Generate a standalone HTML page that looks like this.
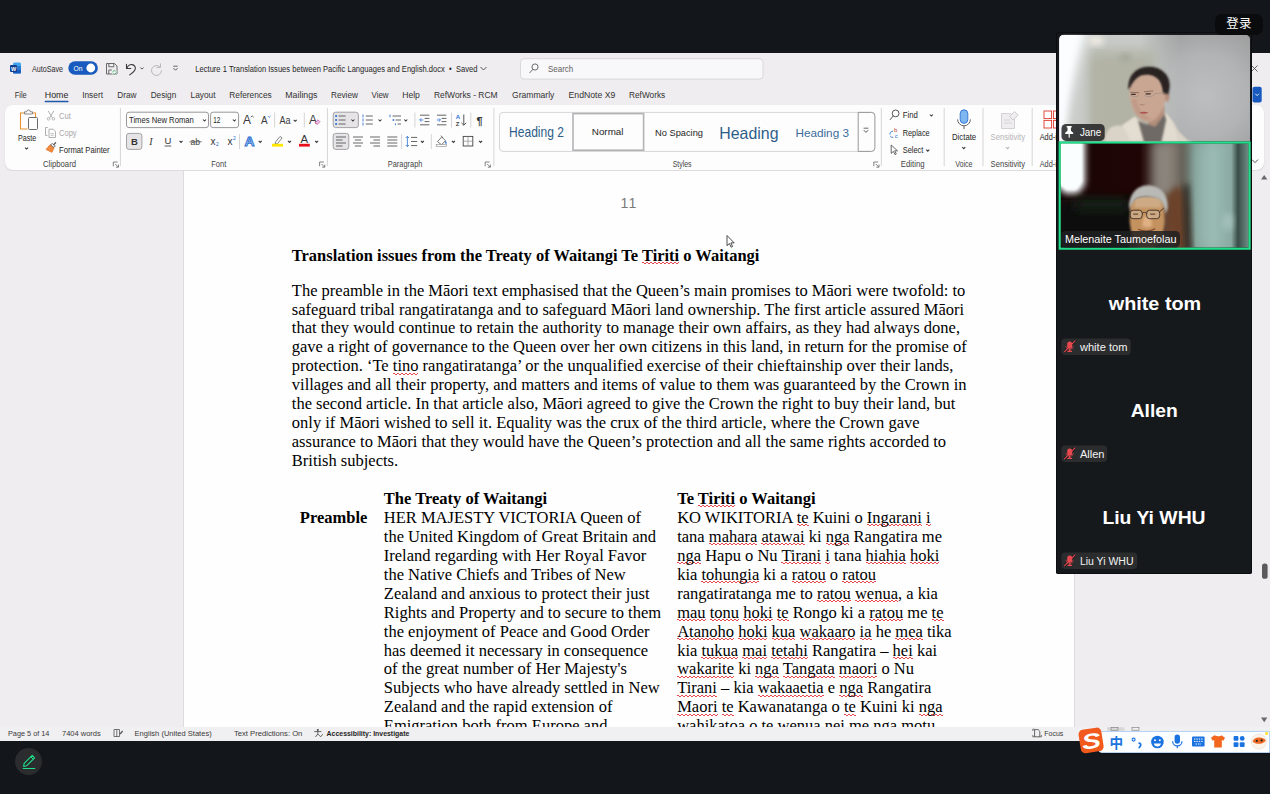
<!DOCTYPE html>
<html lang="en">
<head>
<meta charset="utf-8">
<title>Lecture 1 Translation Issues between Pacific Languages and English.docx</title>
<style>
*{box-sizing:border-box;margin:0;padding:0}
html,body{width:1270px;height:794px;overflow:hidden;background:#13161a}
body{position:relative;font-family:"Liberation Sans","Noto Sans CJK SC",sans-serif}
.abs{position:absolute}
#word{left:0;top:53px;width:1270px;height:688px;background:#efedf0;overflow:hidden}
#ribbon{left:5px;top:52px;width:1259px;height:65px;background:#fdfdfd;border-radius:8px;box-shadow:0 1px 2px rgba(0,0,0,.10)}
#docarea{left:0;top:118px;width:1270px;height:556px;background:#efedf0;overflow:hidden}
#page{left:183.3px;top:0;width:891.9px;height:556px;background:#fefefe;border-left:1.5px solid #dddbde;border-right:1px solid #dddbde}
#status{left:0;top:674px;width:1270px;height:14px;background:#f0eff1}
.doc{font-family:"Liberation Serif","Noto Serif CJK SC",serif;font-size:16.5px;line-height:18.93px;color:#000;white-space:nowrap}
.doc b{font-weight:bold}
.w{background-image:repeating-linear-gradient(90deg,#e5484d 0 2px,transparent 2px 4px),repeating-linear-gradient(90deg,transparent 0 2px,#e5484d 2px 4px);background-size:100% 1px,100% 1px;background-position:0 16.2px,0 17.2px;background-repeat:no-repeat}
#chrome{left:0;top:0;width:1270px;height:794px;pointer-events:none}
</style>
</head>
<body>
<!-- WORD WINDOW -->
<div id="word" class="abs">
  <div id="ribbon" class="abs"></div>
  <div id="docarea" class="abs">
    <div id="page" class="abs"></div>
        <div class="abs" style="left:620.5px;top:23.8px;font-size:14.1px;line-height:16px;color:#7a7a7a;letter-spacing:1.2px">11</div>
    <div class="abs doc" style="left:291.8px;top:76.3px;font-size:16.48px"><b>Translation issues from the Treaty of Waitangi Te <span class="w">Tiriti</span> o Waitangi</b></div>
    <div class="abs doc" style="left:291.8px;top:110.6px">
      <div>The preamble in the Māori text emphasised that the Queen’s main promises to Māori were twofold: to</div>
      <div>safeguard tribal rangatiratanga and to safeguard Māori land ownership. The first article assured Māori</div>
      <div>that they would continue to retain the authority to manage their own affairs, as they had always done,</div>
      <div>gave a right of governance to the Queen over her own citizens in this land, in return for the promise of</div>
      <div>protection. ‘Te <span class="w">tino</span> rangatiratanga’ or the unqualified exercise of their chieftainship over their lands,</div>
      <div>villages and all their property, and matters and items of value to them was guaranteed by the Crown in</div>
      <div>the second article. In that article also, Māori agreed to give the Crown the right to buy their land, but</div>
      <div>only if Māori wished to sell it. Equality was the crux of the third article, where the Crown gave</div>
      <div>assurance to Māori that they would have the Queen’s protection and all the same rights accorded to</div>
      <div>British subjects.</div>
    </div>
    <div class="abs doc" style="left:299.8px;top:338px;font-size:16.5px"><b>Preamble</b></div>
    <div class="abs doc" style="left:383.8px;top:319px;font-size:16.5px">
      <div><b>The Treaty of Waitangi</b></div>
      <div>HER MAJESTY VICTORIA Queen of</div>
      <div>the United Kingdom of Great Britain and</div>
      <div>Ireland regarding with Her Royal Favor</div>
      <div>the Native Chiefs and Tribes of New</div>
      <div>Zealand and anxious to protect their just</div>
      <div>Rights and Property and to secure to them</div>
      <div>the enjoyment of Peace and Good Order</div>
      <div>has deemed it necessary in consequence</div>
      <div>of the great number of Her Majesty's</div>
      <div>Subjects who have already settled in New</div>
      <div>Zealand and the rapid extension of</div>
      <div>Emigration both from Europe and</div>
    </div>
    <div class="abs doc" style="left:677.2px;top:319px;font-size:16.5px">
      <div><b>Te <span class="w">Tiriti</span> o Waitangi</b></div>
      <div>KO WIKITORIA <span class="w">te</span> Kuini o <span class="w">Ingarani</span> <span class="w">i</span></div>
      <div>tana <span class="w">mahara</span> <span class="w">atawai</span> ki <span class="w">nga</span> Rangatira me</div>
      <div><span class="w">nga</span> Hapu o Nu <span class="w">Tirani</span> <span class="w">i</span> tana <span class="w">hiahia</span> <span class="w">hoki</span></div>
      <div>kia <span class="w">tohungia</span> ki a <span class="w">ratou</span> o <span class="w">ratou</span></div>
      <div>rangatiratanga me to <span class="w">ratou</span> <span class="w">wenua</span>, a kia</div>
      <div><span class="w">mau</span> <span class="w">tonu</span> <span class="w">hoki</span> <span class="w">te</span> Rongo ki a <span class="w">ratou</span> me <span class="w">te</span></div>
      <div><span class="w">Atanoho</span> <span class="w">hoki</span> <span class="w">kua</span> <span class="w">wakaaro</span> <span class="w">ia</span> he <span class="w">mea</span> tika</div>
      <div>kia <span class="w">tukua</span> <span class="w">mai</span> <span class="w">tetahi</span> Rangatira – <span class="w">hei</span> kai</div>
      <div><span class="w">wakarite</span> ki <span class="w">nga</span> <span class="w">Tangata</span> <span class="w">maori</span> o Nu</div>
      <div><span class="w">Tirani</span> – kia <span class="w">wakaaetia</span> e <span class="w">nga</span> Rangatira</div>
      <div><span class="w">Maori</span> <span class="w">te</span> Kawanatanga o <span class="w">te</span> Kuini ki <span class="w">nga</span></div>
      <div><span class="w">wahikatoa</span> o <span class="w">te</span> <span class="w">wenua</span> nei me <span class="w">nga</span> <span class="w">motu</span></div>
    </div>

  </div>
  <div id="status" class="abs"></div>
</div>
<svg id="chrome" class="abs" width="1270" height="794" viewBox="0 0 1270 794" font-family="Liberation Sans, sans-serif">
<g id="titlebar">
<rect x="13" y="62.5" width="8" height="11" rx="1.5" fill="#41a5ee"/><rect x="13" y="66" width="8" height="4" fill="#2b7cd3"/><rect x="13" y="69.8" width="8" height="3.7" rx="1" fill="#185abd"/><rect x="10" y="65" width="7" height="7" rx="1" fill="#103f91"/>
<text x="11" y="70.6" font-size="5.5" font-weight="bold" fill="#fff">W</text>
<text x="32.0" y="71.6" font-size="8.5" fill="#2b2b2b" textLength="31.0" lengthAdjust="spacingAndGlyphs">AutoSave</text>
<rect x="68.3" y="61.3" width="29.6" height="13.4" rx="6.7" fill="#185abd"/><circle cx="90.8" cy="68" r="4.4" fill="#fff"/>
<text x="73.5" y="71.0" font-size="8" fill="#fff" textLength="9.0" lengthAdjust="spacingAndGlyphs">On</text>
<g fill="none" stroke="#5a5a5a" stroke-width="0.9"><path d="M106.5 63.5h8l2.5 2.5v8h-10.5z"/><path d="M108.8 63.5v3.3h5v-3.3"/><path d="M108.8 74v-4h3"/></g><path d="M112.3 70.5h4.2v3.8h-4.2z" fill="#fff"/><path d="M112.6 72.4a1.8 1.8 0 0 1 3.2-1M116.2 72.3a1.8 1.8 0 0 1-3.2 1" fill="none" stroke="#2e9c5e" stroke-width="0.8"/>
<path d="M126.5 64.2v4.3h4.3M126.8 68.2c1.3-2.6 3.4-3.8 5.3-3.6 2.3.3 3.5 2.3 3.2 4.3-.4 2.3-2.6 3.9-5.6 6" fill="none" stroke="#3a3a3a" stroke-width="1.1" stroke-linecap="round" stroke-linejoin="round"/>
<path d="M140.3 67.5l1.6 1.6 1.6-1.6" fill="none" stroke="#444" stroke-width="0.9"/>
<path d="M160.5 63.8v3.6h-3.6M160.3 67.2a5 5 0 1 0 1.2 3.6" fill="none" stroke="#b9b7ba" stroke-width="1" stroke-linecap="round"/>
<path d="M173.3 66.2h4.4" stroke="#444" stroke-width="0.8"/><path d="M173.5 68.2l2 2 2-2" fill="none" stroke="#444" stroke-width="0.9"/>
<text x="195.3" y="71.6" font-size="8.5" fill="#262626" textLength="282.1" lengthAdjust="spacingAndGlyphs">Lecture 1 Translation Issues between Pacific Languages and English.docx  •  Saved</text>
<path d="M480.5 67l3 3 3-3" fill="none" stroke="#444" stroke-width="0.9"/>
<rect x="520.5" y="58.7" width="242.5" height="20.4" rx="3.5" fill="#f8f7f9" stroke="#d9d7da" stroke-width="1"/>
<circle cx="535" cy="67" r="3.1" fill="none" stroke="#5f5f5f" stroke-width="0.9"/><path d="M532.8 69.4l-3 3.3" stroke="#5f5f5f" stroke-width="0.9" stroke-linecap="round"/>
<text x="548.0" y="71.6" font-size="8.8" fill="#5f5f5f" textLength="25.2" lengthAdjust="spacingAndGlyphs">Search</text>
<path d="M1251.5 65.5l6 6M1257.5 65.5l-6 6" stroke="#555" stroke-width="0.9"/>
</g>
<g id="tabs">
<text x="14.7" y="97.8" font-size="9.2" fill="#333" textLength="12.1" lengthAdjust="spacingAndGlyphs">File</text>
<text x="44.8" y="97.8" font-size="9.2" fill="#1f1f1f" textLength="23.6" lengthAdjust="spacingAndGlyphs">Home</text>
<text x="82.2" y="97.8" font-size="9.2" fill="#333" textLength="20.8" lengthAdjust="spacingAndGlyphs">Insert</text>
<text x="117.2" y="97.8" font-size="9.2" fill="#333" textLength="19.3" lengthAdjust="spacingAndGlyphs">Draw</text>
<text x="150.7" y="97.8" font-size="9.2" fill="#333" textLength="25.5" lengthAdjust="spacingAndGlyphs">Design</text>
<text x="190.5" y="97.8" font-size="9.2" fill="#333" textLength="25.0" lengthAdjust="spacingAndGlyphs">Layout</text>
<text x="229.3" y="97.8" font-size="9.2" fill="#333" textLength="42.4" lengthAdjust="spacingAndGlyphs">References</text>
<text x="285.3" y="97.8" font-size="9.2" fill="#333" textLength="32.2" lengthAdjust="spacingAndGlyphs">Mailings</text>
<text x="331.0" y="97.8" font-size="9.2" fill="#333" textLength="26.9" lengthAdjust="spacingAndGlyphs">Review</text>
<text x="371.5" y="97.8" font-size="9.2" fill="#333" textLength="17.1" lengthAdjust="spacingAndGlyphs">View</text>
<text x="402.2" y="97.8" font-size="9.2" fill="#333" textLength="17.7" lengthAdjust="spacingAndGlyphs">Help</text>
<text x="434.0" y="97.8" font-size="9.2" fill="#333" textLength="63.5" lengthAdjust="spacingAndGlyphs">RefWorks - RCM</text>
<text x="512.0" y="97.8" font-size="9.2" fill="#333" textLength="42.4" lengthAdjust="spacingAndGlyphs">Grammarly</text>
<text x="568.5" y="97.8" font-size="9.2" fill="#333" textLength="46.9" lengthAdjust="spacingAndGlyphs">EndNote X9</text>
<text x="629.0" y="97.8" font-size="9.2" fill="#333" textLength="36.2" lengthAdjust="spacingAndGlyphs">RefWorks</text>
<rect x="44.6" y="100.8" width="24" height="1.4" rx="0.7" fill="#1f5aa8"/>
<rect x="1252.5" y="86.8" width="9.2" height="15.6" rx="2" fill="#185abd"/><path d="M1255.3 93.8l1.8 1.8 1.8-1.8" fill="none" stroke="#fff" stroke-width="0.9"/>
</g>
<g id="rib-clipboard">
<path d="M25.5 113h-5v16h7" fill="none" stroke="#e8912d" stroke-width="1.1"/><path d="M31.5 113h4v4" fill="none" stroke="#e8912d" stroke-width="1.1"/>
<path d="M24.5 114v-2.2h2.2a1.8 1.8 0 0 1 3.6 0h2.2V114z" fill="#fdfdfd" stroke="#7a7a7a" stroke-width="0.9"/>
<rect x="28.5" y="117.5" width="9" height="12" rx="1" fill="#fdfdfd" stroke="#6a6a6a" stroke-width="1"/>
<text x="18.0" y="140.8" font-size="9" fill="#262626" textLength="18.3" lengthAdjust="spacingAndGlyphs">Paste</text>
<path d="M25.1 147.6l1.5 1.5 1.5 -1.5" fill="none" stroke="#3a3a3a" stroke-width="1.05"/>
<path d="M48.2 111l4.2 6.8M53.8 111l-4.2 6.8" stroke="#a9a7aa" stroke-width="0.9"/><circle cx="48.6" cy="118.8" r="1.3" fill="none" stroke="#a9a7aa" stroke-width="0.8"/><circle cx="53.4" cy="118.8" r="1.3" fill="none" stroke="#a9a7aa" stroke-width="0.8"/>
<text x="59.0" y="118.6" font-size="9" fill="#a9a7aa" textLength="11.9" lengthAdjust="spacingAndGlyphs">Cut</text>
<path d="M47.8 127.5h-2.3v8h2" fill="none" stroke="#a9a7aa" stroke-width="0.9"/><path d="M49 129.2h4l2.5 2.5v5.8h-6.5z" fill="none" stroke="#a9a7aa" stroke-width="0.9"/><path d="M50.6 133.5h3.2M50.6 135.3h3.2" stroke="#a9a7aa" stroke-width="0.7"/>
<text x="59.0" y="135.9" font-size="9" fill="#a9a7aa" textLength="17.6" lengthAdjust="spacingAndGlyphs">Copy</text>
<path d="M46 149.5l4-4.8 4 3.2-2 4.5z" fill="#f08a3c" stroke="#d9681c" stroke-width="0.6"/><path d="M50.5 144.8l1.8-1.3 3 2.4-1.3 1.6z" fill="#fdfdfd" stroke="#555" stroke-width="0.8"/><path d="M53.8 144.6l1.8-1.8" stroke="#555" stroke-width="1.3" stroke-linecap="round"/>
<text x="59.0" y="152.9" font-size="9" fill="#262626" textLength="50.6" lengthAdjust="spacingAndGlyphs">Format Painter</text>
<text x="43.0" y="166.6" font-size="8.7" fill="#444" textLength="33.0" lengthAdjust="spacingAndGlyphs">Clipboard</text>
<path d="M113.3 166.3V162h4.3" fill="none" stroke="#666" stroke-width="0.8"/><path d="M115.3 164l3 3M118.5 164.6v2.6h-2.6" fill="none" stroke="#666" stroke-width="0.8"/>
<path d="M120.4 108V166" stroke="#d6d4d7" stroke-width="1"/>
</g>
<g id="rib-font">
<rect x="126.5" y="112.2" width="82" height="15.4" rx="2.5" fill="#fdfdfd" stroke="#8d8b8e" stroke-width="0.9"/>
<text x="129.0" y="123.0" font-size="9" fill="#262626" textLength="64.8" lengthAdjust="spacingAndGlyphs">Times New Roman</text>
<path d="M203.0 119.5l1.5 1.5 1.5 -1.5" fill="none" stroke="#3a3a3a" stroke-width="1.05"/>
<rect x="210.6" y="112.2" width="28" height="15.4" rx="2.5" fill="#fdfdfd" stroke="#8d8b8e" stroke-width="0.9"/>
<text x="213.2" y="123.0" font-size="9" fill="#262626" textLength="7.2" lengthAdjust="spacingAndGlyphs">12</text>
<path d="M232.9 119.5l1.5 1.5 1.5 -1.5" fill="none" stroke="#3a3a3a" stroke-width="1.05"/>
<text x="243" y="124" font-size="12" fill="#3a3a3a" textLength="8" lengthAdjust="spacingAndGlyphs">A</text><path d="M250.8 117.2l1.4-1.4 1.4 1.4" fill="none" stroke="#3a3a3a" stroke-width="0.8"/>
<text x="261" y="124" font-size="10" fill="#3a3a3a" textLength="6.6" lengthAdjust="spacingAndGlyphs">A</text><path d="M267.8 116l1.4 1.4 1.4-1.4" fill="none" stroke="#2a6fd0" stroke-width="0.8"/>
<path d="M274.6 112.5V127.5" stroke="#d6d4d7" stroke-width="1"/>
<text x="279.5" y="123.5" font-size="10" fill="#3a3a3a" textLength="11.0" lengthAdjust="spacingAndGlyphs">Aa</text>
<path d="M293.7 119.8l1.5 1.5 1.5 -1.5" fill="none" stroke="#3a3a3a" stroke-width="1.05"/>
<path d="M304.3 112.5V127.5" stroke="#d6d4d7" stroke-width="1"/>
<text x="309" y="124" font-size="12" fill="#3a3a3a" textLength="8" lengthAdjust="spacingAndGlyphs">A</text><path d="M315.2 122.6l2.8-2.8 1.9 1.9-2.8 2.8z" fill="#f4c6e6" stroke="#b0409a" stroke-width="0.7"/>
<rect x="126.5" y="133.4" width="15.4" height="16" rx="2.5" fill="#e6e4e7" stroke="#9a989b" stroke-width="0.9"/>
<text x="130.9" y="144.6" font-size="9.5" font-weight="bold" fill="#333">B</text>
<text x="149.3" y="144.6" font-size="10" font-style="italic" font-family="Liberation Serif, serif" fill="#333">I</text>
<text x="164.6" y="143.8" font-size="9.5" fill="#333">U</text><path d="M164.6 146h6.6" stroke="#333" stroke-width="0.8"/>
<path d="M179.5 140.9l1.5 1.5 1.5 -1.5" fill="none" stroke="#3a3a3a" stroke-width="1.05"/>
<text x="190.6" y="144.6" font-size="9" fill="#444" textLength="9.5" lengthAdjust="spacingAndGlyphs">ab</text><path d="M189.4 141.8h12.4" stroke="#444" stroke-width="0.7"/>
<text x="210.6" y="144.6" font-size="10" fill="#333">x</text><text x="216" y="146.4" font-size="5" fill="#2a6fd0">2</text>
<text x="227.6" y="144.6" font-size="10" fill="#333">x</text><text x="233" y="140" font-size="5" fill="#2a6fd0">2</text>
<path d="M239.5 134V149" stroke="#d6d4d7" stroke-width="1"/>
<text x="244.6" y="146" font-size="13" font-weight="bold" fill="#cfe3fa" stroke="#2a6fd0" stroke-width="0.9" textLength="10" lengthAdjust="spacingAndGlyphs">A</text>
<path d="M258.7 140.9l1.5 1.5 1.5 -1.5" fill="none" stroke="#3a3a3a" stroke-width="1.05"/>
<path d="M275.5 142l4.6-5.6 2 1.6-4.6 5.6-2.4.6z" fill="#fdfdfd" stroke="#666" stroke-width="0.8"/><rect x="272" y="143.8" width="11" height="2.8" fill="#ffe600"/>
<path d="M288.0 140.9l1.5 1.5 1.5 -1.5" fill="none" stroke="#3a3a3a" stroke-width="1.05"/>
<text x="300.6" y="142.6" font-size="10" fill="#333" textLength="7.6" lengthAdjust="spacingAndGlyphs">A</text><rect x="299" y="143.8" width="10.8" height="2.8" fill="#e8121d"/>
<path d="M315.1 140.9l1.5 1.5 1.5 -1.5" fill="none" stroke="#3a3a3a" stroke-width="1.05"/>
<text x="211.3" y="166.6" font-size="8.7" fill="#444" textLength="15.0" lengthAdjust="spacingAndGlyphs">Font</text>
<path d="M319.6 166.3V162h4.3" fill="none" stroke="#666" stroke-width="0.8"/><path d="M321.6 164l3 3M324.8 164.6v2.6h-2.6" fill="none" stroke="#666" stroke-width="0.8"/>
<path d="M327.4 108V166" stroke="#d6d4d7" stroke-width="1"/>
</g>
<g id="rib-para">
<rect x="333.2" y="112.2" width="25.2" height="15.4" rx="2.5" fill="#e6e4e7" stroke="#9a989b" stroke-width="0.9"/>
<rect x="335.2" y="115.1" width="1.8" height="1.8" fill="#2a6fd0"/><path d="M338.6 116h7" stroke="#555" stroke-width="0.9"/>
<rect x="335.2" y="119.1" width="1.8" height="1.8" fill="#2a6fd0"/><path d="M338.6 120h7" stroke="#555" stroke-width="0.9"/>
<rect x="335.2" y="123.1" width="1.8" height="1.8" fill="#2a6fd0"/><path d="M338.6 124h7" stroke="#555" stroke-width="0.9"/>
<path d="M351.4 119.5l1.5 1.5 1.5 -1.5" fill="none" stroke="#3a3a3a" stroke-width="1.05"/>
<path d="M363 114.6v2.8" stroke="#2a6fd0" stroke-width="0.9"/><path d="M365.8 116h7" stroke="#555" stroke-width="0.9"/>
<path d="M363 118.6v2.8" stroke="#2a6fd0" stroke-width="0.9"/><path d="M365.8 120h7" stroke="#555" stroke-width="0.9"/>
<path d="M363 122.6v2.8" stroke="#2a6fd0" stroke-width="0.9"/><path d="M365.8 124h7" stroke="#555" stroke-width="0.9"/>
<path d="M378.5 119.5l1.5 1.5 1.5 -1.5" fill="none" stroke="#3a3a3a" stroke-width="1.05"/>
<path d="M390 114.6v2.6" stroke="#2a6fd0" stroke-width="0.9"/><path d="M392.6 116h8.4" stroke="#555" stroke-width="0.9"/><rect x="392.6" y="119.2" width="1.6" height="1.6" fill="#2a6fd0"/><path d="M395.6 120h5.4" stroke="#555" stroke-width="0.9"/><path d="M395.4 123.2v2" stroke="#2a6fd0" stroke-width="0.8"/><path d="M397.6 124h3.4" stroke="#555" stroke-width="0.9"/>
<path d="M404.3 119.5l1.5 1.5 1.5 -1.5" fill="none" stroke="#3a3a3a" stroke-width="1.05"/>
<path d="M414.9 112.5V127.5" stroke="#d6d4d7" stroke-width="1"/>
<path d="M420 115.2h9.4M424.6 118.4h4.8M424.6 121.6h4.8M420 124.8h9.4" stroke="#555" stroke-width="0.9"/><path d="M423.4 120h-3.6M421.4 118.3l-1.7 1.7 1.7 1.7" fill="none" stroke="#2a6fd0" stroke-width="0.8"/>
<path d="M437 115.2h9.4M441.6 118.4h4.8M441.6 121.6h4.8M437 124.8h9.4" stroke="#555" stroke-width="0.9"/><path d="M436.8 120h3.6M438.8 118.3l1.7 1.7-1.7 1.7" fill="none" stroke="#2a6fd0" stroke-width="0.8"/>
<path d="M451.5 112.5V127.5" stroke="#d6d4d7" stroke-width="1"/>
<text x="455.8" y="119.4" font-size="6" font-weight="bold" fill="#2a6fd0">A</text><text x="455.8" y="126" font-size="6" font-weight="bold" fill="#444">Z</text><path d="M463.8 114.5v10.6M461.4 122.8l2.4 2.4 2.4-2.4" fill="none" stroke="#444" stroke-width="0.9"/>
<path d="M470.8 112.5V127.5" stroke="#d6d4d7" stroke-width="1"/>
<text x="476.6" y="124.6" font-size="11" font-weight="bold" fill="#333">¶</text>
<rect x="333.2" y="133.4" width="15.6" height="16" rx="2.5" fill="#e6e4e7" stroke="#9a989b" stroke-width="0.9"/>
<path d="M336 137h10M336 140h6.6M336 143h10M336 146h6.6" stroke="#555" stroke-width="0.9"/>
<path d="M353 137h10M354.8 140h6.4M353 143h10M354.8 146h6.4" stroke="#555" stroke-width="0.9"/>
<path d="M370 137h10M373.4 140h6.6M370 143h10M373.4 146h6.6" stroke="#555" stroke-width="0.9"/>
<path d="M387.3 137h10M387.3 140h10M387.3 143h10M387.3 146h10" stroke="#555" stroke-width="0.9"/>
<path d="M401.6 134V149" stroke="#d6d4d7" stroke-width="1"/>
<path d="M407.4 136.4v10.2M405.8 138l1.6-1.7 1.6 1.7M405.8 145l1.6 1.7 1.6-1.7" fill="none" stroke="#2a6fd0" stroke-width="0.8"/><path d="M411 137.4h6.2M411 141.5h6.2M411 145.6h6.2" stroke="#555" stroke-width="0.9"/>
<path d="M420.9 140.9l1.5 1.5 1.5 -1.5" fill="none" stroke="#3a3a3a" stroke-width="1.05"/>
<path d="M431.3 134V149" stroke="#d6d4d7" stroke-width="1"/>
<path d="M437.5 141.6l4.2-4.6 3.8 3.6-4 4.2z" fill="#fdfdfd" stroke="#555" stroke-width="0.8"/><path d="M441 135.6l1.8 2.2" stroke="#555" stroke-width="0.8"/><path d="M445.6 141.2c.9 1.2 1.1 2 .4 2.6-.7-.6-.9-1.4-.4-2.6z" fill="#2a6fd0" stroke="#2a6fd0" stroke-width="0.5"/><rect x="436.2" y="144.6" width="10.4" height="2" fill="#fdfdfd" stroke="#8a8a8a" stroke-width="0.6"/>
<path d="M451.9 140.9l1.5 1.5 1.5 -1.5" fill="none" stroke="#3a3a3a" stroke-width="1.05"/>
<rect x="463.2" y="136.4" width="9.6" height="9.6" fill="none" stroke="#444" stroke-width="0.9"/><path d="M468 136.4v9.6M463.2 141.2h9.6" stroke="#8a8a8a" stroke-width="0.7"/>
<path d="M479.1 140.9l1.5 1.5 1.5 -1.5" fill="none" stroke="#3a3a3a" stroke-width="1.05"/>
<text x="387.8" y="166.6" font-size="8.7" fill="#444" textLength="34.6" lengthAdjust="spacingAndGlyphs">Paragraph</text>
<path d="M485.2 166.3V162h4.3" fill="none" stroke="#666" stroke-width="0.8"/><path d="M487.2 164l3 3M490.4 164.6v2.6h-2.6" fill="none" stroke="#666" stroke-width="0.8"/>
<path d="M493.9 108V166" stroke="#d6d4d7" stroke-width="1"/>
</g>
<g id="rib-styles">
<rect x="499.5" y="112.4" width="375" height="39" rx="3.5" fill="#fdfdfd" stroke="#d6d4d7" stroke-width="1"/>
<path d="M858.2 112.4h13.2a3.5 3.5 0 0 1 3.5 3.5v32a3.5 3.5 0 0 1-3.5 3.5h-13.2z" fill="#fdfdfd" stroke="#8d8b8e" stroke-width="0.9"/>
<path d="M863.6 128.2h4.8" stroke="#444" stroke-width="0.8"/><path d="M863.8 130.2l2.2 2.2 2.2-2.2" fill="none" stroke="#444" stroke-width="0.9"/>
<text x="509.0" y="137.0" font-size="14.2" fill="#2f5d8a" textLength="55.0" lengthAdjust="spacingAndGlyphs">Heading 2</text>
<rect x="573" y="113.6" width="70.6" height="36.6" fill="#fdfdfd" stroke="#b4b2b5" stroke-width="1.6"/>
<text x="591.8" y="135.2" font-size="9" fill="#262626" textLength="31.7" lengthAdjust="spacingAndGlyphs">Normal</text>
<text x="655.0" y="135.6" font-size="9" fill="#262626" textLength="48.0" lengthAdjust="spacingAndGlyphs">No Spacing</text>
<text x="719.3" y="138.6" font-size="16.5" fill="#2f5d8a" textLength="59.2" lengthAdjust="spacingAndGlyphs">Heading</text>
<text x="795.4" y="136.9" font-size="11.8" fill="#3b6c9c" textLength="53.6" lengthAdjust="spacingAndGlyphs">Heading 3</text>
<text x="672.7" y="166.6" font-size="8.7" fill="#444" textLength="18.9" lengthAdjust="spacingAndGlyphs">Styles</text>
<path d="M873.8 166.3V162h4.3" fill="none" stroke="#666" stroke-width="0.8"/><path d="M875.8 164l3 3M879.0 164.6v2.6h-2.6" fill="none" stroke="#666" stroke-width="0.8"/>
<path d="M881.3 108V166" stroke="#d6d4d7" stroke-width="1"/>
</g>
<g id="rib-editing">
<circle cx="895.6" cy="113.4" r="3.4" fill="none" stroke="#444" stroke-width="0.9"/><path d="M893.2 116l-3 3.6" stroke="#444" stroke-width="0.9" stroke-linecap="round"/>
<text x="902.7" y="118.2" font-size="9" fill="#262626" textLength="15.1" lengthAdjust="spacingAndGlyphs">Find</text>
<path d="M929.9 114.5l1.5 1.5 1.5 -1.5" fill="none" stroke="#3a3a3a" stroke-width="1.05"/>
<path d="M890 134.6a3 3 0 0 1 3-3.4M893.2 137.4a3 3 0 0 1-3-1.4" fill="none" stroke="#2a6fd0" stroke-width="0.9"/><text x="894" y="132.4" font-size="6" fill="#c0392b">b</text><text x="894.8" y="138.4" font-size="6" fill="#2a6fd0">c</text>
<text x="902.7" y="135.7" font-size="9" fill="#262626" textLength="27.0" lengthAdjust="spacingAndGlyphs">Replace</text>
<path d="M891.2 145v8.4l2.2-2 1.6 3.2 1.3-.7-1.6-3.1h2.8z" fill="#fdfdfd" stroke="#444" stroke-width="0.8" stroke-linejoin="round"/>
<text x="902.7" y="152.9" font-size="9" fill="#262626" textLength="20.7" lengthAdjust="spacingAndGlyphs">Select</text>
<path d="M926.3 149.7l1.5 1.5 1.5 -1.5" fill="none" stroke="#3a3a3a" stroke-width="1.05"/>
<text x="900.7" y="166.6" font-size="8.7" fill="#444" textLength="23.9" lengthAdjust="spacingAndGlyphs">Editing</text>
<path d="M944.2 108V166" stroke="#d6d4d7" stroke-width="1"/>
</g>
<g id="rib-voice">
<rect x="960.2" y="109.8" width="7.6" height="13.6" rx="3.8" fill="#7db6f0" stroke="#2a6fd0" stroke-width="0.9"/><path d="M957.6 119.4a6.4 6.4 0 0 0 12.8 0M964 125.8v3.4" fill="none" stroke="#555" stroke-width="0.9"/>
<text x="952.0" y="140.4" font-size="9" fill="#262626" textLength="24.2" lengthAdjust="spacingAndGlyphs">Dictate</text>
<path d="M962.3 147.2l1.5 1.5 1.5 -1.5" fill="none" stroke="#3a3a3a" stroke-width="1.05"/>
<text x="955.2" y="166.6" font-size="8.7" fill="#444" textLength="17.4" lengthAdjust="spacingAndGlyphs">Voice</text>
<path d="M983.0 108V166" stroke="#d6d4d7" stroke-width="1"/>
<path d="M1001.5 113.5h9l4 4v11h-13z" fill="#efedf0" stroke="#cfcdd0" stroke-width="0.9"/><path d="M1009.5 116.5l5-5 3.6 3.6-5 5z" fill="#efedf0" stroke="#c6c4c7" stroke-width="0.9"/><path d="M1004 120h6M1004 123h8" stroke="#cfcdd0" stroke-width="0.8"/>
<text x="990.6" y="140.4" font-size="9" fill="#b5b3b6" textLength="34.4" lengthAdjust="spacingAndGlyphs">Sensitivity</text>
<path d="M1006.1 147.2l1.5 1.5 1.5 -1.5" fill="none" stroke="#b5b3b6" stroke-width="1.05"/>
<text x="990.6" y="166.6" font-size="8.7" fill="#444" textLength="34.4" lengthAdjust="spacingAndGlyphs">Sensitivity</text>
<path d="M1032.2 108V166" stroke="#d6d4d7" stroke-width="1"/>
<g fill="none" stroke="#e0392d" stroke-width="0.9"><rect x="1044" y="111" width="7.6" height="7.6"/><rect x="1044" y="120.4" width="7.6" height="7.6"/><rect x="1053.4" y="111" width="7.6" height="7.6"/><rect x="1053.4" y="120.4" width="7.6" height="7.6"/></g>
<text x="1039.7" y="140.4" font-size="9" fill="#262626" textLength="24.8" lengthAdjust="spacingAndGlyphs">Add-ins</text>
<text x="1039.7" y="166.6" font-size="8.7" fill="#444" textLength="24.8" lengthAdjust="spacingAndGlyphs">Add-ins</text>
<path d="M1252 159.6l3 3 3-3" fill="none" stroke="#444" stroke-width="0.9"/>
</g>
<g id="statusbar">
<text x="8.0" y="735.9" font-size="7.8" fill="#3a3a3a" textLength="41.4" lengthAdjust="spacingAndGlyphs">Page 5 of 14</text>
<text x="62.0" y="735.9" font-size="7.8" fill="#3a3a3a" textLength="38.8" lengthAdjust="spacingAndGlyphs">7404 words</text>
<path d="M114 729.5h5.5v7H114zM116.8 729.5v7" fill="none" stroke="#555" stroke-width="0.8"/><path d="M119.6 733.6l2.6-3 .9.8-2.6 3z" fill="#555"/>
<text x="134.6" y="735.9" font-size="7.8" fill="#3a3a3a" textLength="77.1" lengthAdjust="spacingAndGlyphs">English (United States)</text>
<text x="233.9" y="735.9" font-size="7.8" fill="#3a3a3a" textLength="68.5" lengthAdjust="spacingAndGlyphs">Text Predictions: On</text>
<circle cx="317.8" cy="730" r="1" fill="#444"/><path d="M314.2 731.6h7.2M317.8 731.6v2.4M317.8 734l-2.4 3M317.8 734l1.4 1.6" fill="none" stroke="#444" stroke-width="0.8"/><path d="M319.4 735.4l1.2 1.4 2.2-2.6" fill="none" stroke="#444" stroke-width="0.8"/>
<text x="326.6" y="735.9" font-size="7.8" fill="#1f1f1f" font-weight="bold" textLength="82.7" lengthAdjust="spacingAndGlyphs">Accessibility: Investigate</text>
<path d="M1034.6 729.6h3.6l1.6 1.6v5.6h-5.2z" fill="none" stroke="#444" stroke-width="0.8"/><path d="M1032.8 731v-1.8h1.8M1041.4 735v1.8h-1.8M1032.8 735v1.8h1.8" fill="none" stroke="#444" stroke-width="0.7"/>
<text x="1044.3" y="736.2" font-size="8" fill="#3a3a3a" textLength="19.0" lengthAdjust="spacingAndGlyphs">Focus</text>
<rect x="1107" y="727.2" width="17.5" height="3.6" fill="#d9d7da"/><rect x="1111" y="727.6" width="7" height="2.6" fill="none" stroke="#777" stroke-width="0.6"/><rect x="1132" y="727.6" width="7" height="2.6" fill="none" stroke="#777" stroke-width="0.6"/>
</g>
<g id="scroll">
<path d="M1261 179.6l3.2-4.6 3.2 4.6z" fill="#6b696c"/><path d="M1261 717.6l3.2 4.6 3.2-4.6z" fill="#6b696c"/>
<rect x="1262" y="563.4" width="5.6" height="15.4" rx="2.6" fill="#5c5a5d"/>
</g>
<path d="M727 235.5v10.2l2.4-2.2 1.7 3.7 1.5-.7-1.7-3.6h3.3z" fill="#fff" stroke="#222" stroke-width="0.8" stroke-linejoin="round"/>
</svg>
<div id="vpanel" class="abs" style="left:1055.8px;top:32.3px;width:196.2px;height:541.4px;background:#16191c;border-radius:2.5px;box-shadow:inset 0 0 0 1px #0c0d0e;overflow:hidden">
<svg class="abs" style="left:0;top:0" width="196.2" height="541.4" viewBox="1055.8 32.3 196.2 541.4" font-family="Liberation Sans, sans-serif">
<defs>
<filter id="b1" x="-30%" y="-30%" width="160%" height="160%"><feGaussianBlur stdDeviation="0.8"/></filter>
<filter id="b3" x="-30%" y="-30%" width="160%" height="160%"><feGaussianBlur stdDeviation="3"/></filter>
<filter id="b6" x="-30%" y="-30%" width="160%" height="160%"><feGaussianBlur stdDeviation="6"/></filter>
<clipPath id="cj"><path d="M1059 142V40a5 5 0 0 1 5-5h181a5 5 0 0 1 5 5v102z"/></clipPath>
<clipPath id="cm"><rect x="1060.5" y="143.8" width="188" height="104"/></clipPath>
<radialGradient id="gj" cx="1205" cy="96" r="75" gradientUnits="userSpaceOnUse"><stop offset="0" stop-color="#bcbebf"/><stop offset=".55" stop-color="#b1b3b4"/><stop offset="1" stop-color="#9c9e9e"/></radialGradient>
<linearGradient id="gm" x1="0" x2="1" y1="0" y2="0"><stop offset="0" stop-color="#1a0505"/><stop offset=".48" stop-color="#210505"/><stop offset=".56" stop-color="#5a4a42"/><stop offset=".64" stop-color="#5e5a50"/><stop offset=".71" stop-color="#7f9c94"/><stop offset=".8" stop-color="#94b4ac"/><stop offset=".9" stop-color="#8aaaa2"/><stop offset=".935" stop-color="#3a4c47"/><stop offset=".97" stop-color="#5b746e"/><stop offset="1" stop-color="#7a9790"/></linearGradient>
<linearGradient id="gjb" x1="0" x2="1" y1="0" y2="0"><stop offset="0" stop-color="#c8cbc8"/><stop offset="1" stop-color="#c8cbc8" stop-opacity="0"/></linearGradient>
</defs>
<!-- Jane video -->
<g clip-path="url(#cj)">
  <rect x="1059" y="35" width="191" height="107" fill="url(#gj)"/>
  <rect x="1059" y="35" width="82" height="107" fill="#c8cbc8"/>
  <rect x="1140" y="30" width="40" height="120" fill="url(#gjb)"/>
  <rect x="1089" y="50" width="66" height="98" fill="#b3b5a8" filter="url(#b6)"/>
  <rect x="1092" y="62" width="60" height="86" fill="#b2b3a5" filter="url(#b3)"/>
  <ellipse cx="1125" cy="58" rx="6" ry="4" fill="#a3a69a" filter="url(#b3)"/>
  <path d="M1052 28h38l-8 22-8 30-6 30-5 36h-11z" fill="#f4f7f8" filter="url(#b6)"/>
  <path d="M1052 28h30l-9 36-6 36-5 48h-10z" fill="#fbfdfe" filter="url(#b3)"/>
  <ellipse cx="1096" cy="41" rx="8" ry="5" fill="#efebe3" filter="url(#b3)"/>
  <!-- jacket -->
  <path d="M1104 143c1-8 3-14 8-16 3-1.500 7-1.500 10-1l13-9 12 10 10 8 8-22 8 10 6 9 8 8 8 4z" fill="#dad3c7" filter="url(#b1)"/>
  <path d="M1122 126l13-9 3 8 6 16h-14c-2-6-5-11-8-15z" fill="#e4ddd1" filter="url(#b1)"/>
  <path d="M1165 113l8 10 5 18h-16z" fill="#e2dbcf" filter="url(#b1)"/>
  <!-- scarf -->
  <path d="M1138 121l9 4 17-11 2 6-5 23h-17z" fill="#6f6a66" filter="url(#b1)"/>
  <!-- neck -->
  <path d="M1147 112l17-6v9l-9 12-6-2z" fill="#b48e7b" filter="url(#b1)"/>
  <!-- hair back -->
  <path d="M1128.500 89c-1-12 6-21 18-22 13-1 23 7 23 18 0 5-1 9-2.500 13l-6 2-3-20z" fill="#2a2422" filter="url(#b1)"/>
  <!-- face -->
  <path d="M1129.500 88c1-8 8-14 16-14 8 0 14 4 16 10l3 10c2 0 3 2 2 5l-2 4c-1 6-5 12-9 16-3 3-8 4-12 2-6-3-10-9-12-16-1.500-5-2.500-11-2.500-17z" fill="#c9a692" filter="url(#b1)"/>
  <path d="M1131 100c2 8 5 15 11 19 3 2 7 2 10 0-4-1-8-4-11-8-3-4-4-8-5-12z" fill="#bd9583" opacity=".7" filter="url(#b1)"/>
  <!-- hairline -->
  <path d="M1128.500 90c0-9 5-17 14-20 9-2 18 0 22 7 3 5 3 11 1 17l-2.500-1c0-8-3-14-9-17-5-2-11-2-16 1-4 3-7 7-9.500 13z" fill="#2a2422" filter="url(#b1)"/>
  <ellipse cx="1167" cy="98" rx="2" ry="4" fill="#b98f7c" filter="url(#b1)"/>
  <!-- eyes, glasses, nose, lips -->
  <path d="M1131 94.600h4.500M1145.500 94.200h5" stroke="#3a2c28" stroke-width="1.300"/>
  <path d="M1130 92.500l9 .5M1144 92l9-.8" stroke="#5a463e" stroke-width=".8" opacity=".7"/>
  <path d="M1130 95.500c3 2 7 2 9 0M1144 95.500c3 2 8 2 10-.5M1154 94l11-1" stroke="#8f8a88" stroke-width=".6" fill="none" opacity=".9"/>
  <path d="M1139.500 104.500c1.500 1 3.500 1 5 0" stroke="#a97a6a" stroke-width=".9" fill="none"/>
  <path d="M1139 112.800c3-1 6-1 9.500 0-3 1.600-6.500 1.600-9.500 0z" fill="#ad5552"/>
</g>
<!-- Jane label -->
<rect x="1061.3" y="124.2" width="43.2" height="17" rx="4.5" fill="#1f2021" fill-opacity=".84"/>
<path d="M1066.5 126.4h5v1.5h-.8v3.2l2.3 1.9v1.3h-3.4v3.3l-.6.7-.6-.7v-3.3h-3.4v-1.3l2.3-1.9v-3.2h-.8z" fill="#fff"/>
<text x="1079.7" y="136.1" font-size="10.8" fill="#fff" textLength="21.3" lengthAdjust="spacingAndGlyphs">Jane</text>
<!-- Melenaite video -->
<g clip-path="url(#cm)">
  <rect x="1060" y="143" width="190" height="106" fill="url(#gm)"/>
  <rect x="1150" y="140" width="28" height="60" fill="#8a847c" filter="url(#b6)"/>
  <rect x="1056" y="200" width="100" height="56" fill="#080807" filter="url(#b6)"/>
  <rect x="1076" y="198" width="52" height="14" fill="#122016" filter="url(#b6)"/>
  <path d="M1050 136h35v48l-5 8-5 2h-10l-15-14z" fill="#f7fcfe" filter="url(#b3)"/>
  <path d="M1050 136h32v46l-6 8h-10l-16-14z" fill="#fbfeff" filter="url(#b1)"/>
  <path d="M1166 196l10-10 8 4 4 20 1 44h-26z" fill="#6c432b" filter="url(#b3)"/>
  <path d="M1183 186l6-2 3 70h-7z" fill="#2c2c26" filter="url(#b3)"/>
  <path d="M1196 146h26v104h-26z" fill="#9fc0b8" opacity=".55" filter="url(#b6)"/>
  <ellipse cx="1228" cy="222" rx="5" ry="9" fill="#b5d0c9" opacity=".6" filter="url(#b3)"/>
  <!-- body -->
  <path d="M1128 252l3-20h34l6 6 4 14z" fill="#6f5f52" filter="url(#b1)"/>
  <!-- face -->
  <path d="M1130 204c3-8 30-9 34 0l.500 18c-1 13-6 23-12 28h-11c-6-5-11-15-12-28z" fill="#c4925f" filter="url(#b1)"/>
  <path d="M1135 199c6-3 18-3 25 0l1 9h-27z" fill="#cdaa84" filter="url(#b1)"/>
  <path d="M1143 219c2-4 6-4 8 0l1 7c-3 2-7 2-10 0z" fill="#deb083" filter="url(#b1)"/>
  <!-- hair -->
  <path d="M1129.500 210c-2-14 6-24 18-24.500 12 0 21 9 20 23l-2 6c-1-9-5-15-9-16-6-2-14-2-19 0-4 2-6 6-8 11.500z" fill="#b9b9b5" filter="url(#b1)"/>
  <!-- glasses -->
  <g fill="#d6c6b0" fill-opacity=".45" stroke="#3b2e26" stroke-width=".9"><rect x="1130" y="210.500" width="12" height="8.500" rx="3"/><rect x="1146.500" y="210.500" width="13" height="8.500" rx="3"/></g>
  <path d="M1142 213.500c1.500-1 3-1 4.500 0M1159.500 212l4-3.500" stroke="#3b2e26" stroke-width=".9" fill="none"/>
  <path d="M1133 214.500h5M1150 214.500h5" stroke="#4a3528" stroke-width="1.200" opacity=".8"/>
  <path d="M1138 229.500c5 2.500 12 2.500 17-.5" stroke="#7a4630" stroke-width="1.200" fill="none"/>
</g>
<rect x="1059.5" y="142.8" width="189.9" height="106.2" fill="none" stroke="#21e08a" stroke-width="2.1"/>
<rect x="1060.8" y="231.2" width="119" height="16.6" rx="4.5" fill="#1f2021" fill-opacity=".84"/>
<text x="1064.7" y="242.9" font-size="10" fill="#fff" textLength="111.6" lengthAdjust="spacingAndGlyphs">Melenaite Taumoefolau</text>
<!-- name tiles -->
<g font-weight="bold" fill="#fff" font-size="19.2">
<text x="1108.6" y="309.9" textLength="92.4" lengthAdjust="spacingAndGlyphs">white tom</text>
<text x="1130.5" y="417" textLength="47.1" lengthAdjust="spacingAndGlyphs">Allen</text>
<text x="1102.2" y="524" textLength="103.2" lengthAdjust="spacingAndGlyphs">Liu Yi WHU</text>
</g>
<g id="lbl1">
<rect x="1061.2" y="338.8" width="69.4" height="16.4" rx="4" fill="#2a2c2d"/>
<rect x="1061.2" y="445.8" width="45.8" height="16.4" rx="4" fill="#2a2c2d"/>
<rect x="1061.2" y="552.8" width="75.8" height="16.4" rx="4" fill="#2a2c2d"/>
</g>
<g fill="#f4f4f4" font-size="11">
<text x="1079.7" y="350.9" textLength="47.5" lengthAdjust="spacingAndGlyphs">white tom</text>
<text x="1079.7" y="457.9" textLength="24.6" lengthAdjust="spacingAndGlyphs">Allen</text>
<text x="1079.7" y="564.9" textLength="53.6" lengthAdjust="spacingAndGlyphs">Liu Yi WHU</text>
</g>
<g id="mics" fill="none" stroke="#e8484f">
<g><path d="M1064 352.4l11-11.4" stroke="#16191c" stroke-width="2.6"/><rect x="1067" y="341.7" width="5" height="7.4" rx="2.5" fill="#e8484f" stroke="none"/><path d="M1065.8 346.1a3.7 3.7 0 0 0 7.4 0" stroke-width="0.7" opacity=".8"/><path d="M1069.5 349.1v2.2M1067.2 351.7h4.6" stroke-width="1.2"/><path d="M1064 352.4l11-11.4" stroke-width="1.1"/></g>
<g><path d="M1064 459.4l11-11.4" stroke="#16191c" stroke-width="2.6"/><rect x="1067" y="448.7" width="5" height="7.4" rx="2.5" fill="#e8484f" stroke="none"/><path d="M1065.8 453.1a3.7 3.7 0 0 0 7.4 0" stroke-width="0.7" opacity=".8"/><path d="M1069.5 456.1v2.2M1067.2 458.7h4.6" stroke-width="1.2"/><path d="M1064 459.4l11-11.4" stroke-width="1.1"/></g>
<g><path d="M1064 566.4l11-11.4" stroke="#16191c" stroke-width="2.6"/><rect x="1067" y="555.7" width="5" height="7.4" rx="2.5" fill="#e8484f" stroke="none"/><path d="M1065.8 560.1a3.7 3.7 0 0 0 7.4 0" stroke-width="0.7" opacity=".8"/><path d="M1069.5 563.1v2.2M1067.2 565.7h4.6" stroke-width="1.2"/><path d="M1064 566.4l11-11.4" stroke-width="1.1"/></g>
</g>
</svg>
</div>

<div id="sogou" class="abs" style="left:1098px;top:730.5px;width:172px;height:22.5px;background:#fdfeff;border:1px solid #b9d4f1;border-radius:4px 0 0 4px;box-shadow:0 1px 2px rgba(0,0,0,.25)"></div>
<svg class="abs" style="left:1070px;top:720px" width="200" height="40" viewBox="1070 720 200 40" font-family="Liberation Sans, Noto Sans CJK SC, sans-serif">
<g transform="rotate(-9 1091 740.5)"><rect x="1079.6" y="728.6" width="23" height="23.6" rx="4.5" fill="#f15a1c"/>
<text x="1081.6" y="748.4" font-size="21" font-weight="bold" fill="#fff" font-style="italic" textLength="19" lengthAdjust="spacingAndGlyphs">S</text></g>
<text x="1109.4" y="747.6" font-size="14" font-weight="bold" fill="#1a73e0" textLength="13.6" lengthAdjust="spacingAndGlyphs">中</text>
<circle cx="1133.6" cy="739.6" r="1.5" fill="none" stroke="#1a73e0" stroke-width="1.1"/><path d="M1139.2 743.2c1.4.2 2 1.4 1.2 2.8l-1.2 1.6" fill="none" stroke="#1a73e0" stroke-width="1.7" stroke-linecap="round"/>
<circle cx="1157.4" cy="742" r="6.3" fill="#1a73e0"/><circle cx="1155" cy="740.2" r="1" fill="#fff"/><circle cx="1159.8" cy="740.2" r="1" fill="#fff"/><path d="M1153.8 743.6a3.7 3.7 0 0 0 7.2 0z" fill="#fff"/>
<rect x="1174.6" y="734.6" width="5.4" height="9.2" rx="2.7" fill="#1a73e0"/><path d="M1172.6 741.2a4.7 4.7 0 0 0 9.4 0M1177.3 746v2.2" fill="none" stroke="#1a73e0" stroke-width="1.2"/>
<rect x="1192" y="736.4" width="12.6" height="10" rx="1.2" fill="#1a73e0"/><path d="M1194 739h8.6M1194 741.4h8.6M1195.6 744h5.4" stroke="#fff" stroke-width="1" stroke-dasharray="1.4 1"/>
<path d="M1214.6 735.2l-3.6 2.6 1.6 3 1.6-.9v7.6h7.6v-7.6l1.6.9 1.6-3-3.6-2.6c-.9 1.4-4.7 1.4-6.8 0z" fill="#f2661d"/>
<g fill="#1a73e0"><rect x="1233.6" y="736" width="4.8" height="4.8" rx="1"/><rect x="1239.8" y="736" width="4.8" height="4.8" rx="2.4"/><rect x="1233.6" y="742.2" width="4.8" height="4.8" rx="1"/><rect x="1239.8" y="742.2" width="4.8" height="4.8" rx="1"/></g>
<circle cx="1259" cy="741.6" r="7.6" fill="#fbf3ea" stroke="#e8dccd" stroke-width="0.6"/><path d="M1252.6 741.4c1-3 4.2-4.4 7.6-3.8 2.6.4 4.6 1.2 5.6 2.8-1.6 2.2-4 3.4-7 3.4-2.6 0-4.8-.8-6.2-2.4z" fill="#ee6a24"/><circle cx="1256.8" cy="740.8" r="1.1" fill="#222"/><circle cx="1261.6" cy="740.4" r="1.1" fill="#222"/><circle cx="1266.6" cy="733.4" r="1.6" fill="#ffe23a"/>
</svg>

<div class="abs" style="left:1215px;top:13.8px;width:48px;height:21.3px;background:#0a0b0c;border-radius:7px;color:#fff;font-size:12.5px;line-height:21px;text-align:center;letter-spacing:.2px">登录</div>
<div class="abs" style="left:15.3px;top:748.1px;width:27px;height:27px;border-radius:50%;background:#2a2c2e"></div>
<svg class="abs" style="left:15px;top:747px" width="28" height="28" viewBox="0 0 28 28"><path d="M9.2 16.4l8-8 2.4 2.4-8 8-3 .7z" fill="none" stroke="#1fe08a" stroke-width="1.1" stroke-linejoin="round"/><path d="M15.8 9.8l2.4 2.4" stroke="#1fe08a" stroke-width="1"/><path d="M8.2 21.5h11.6" stroke="#1fe08a" stroke-width="1.1" stroke-linecap="round"/></svg>

</body>
</html>
